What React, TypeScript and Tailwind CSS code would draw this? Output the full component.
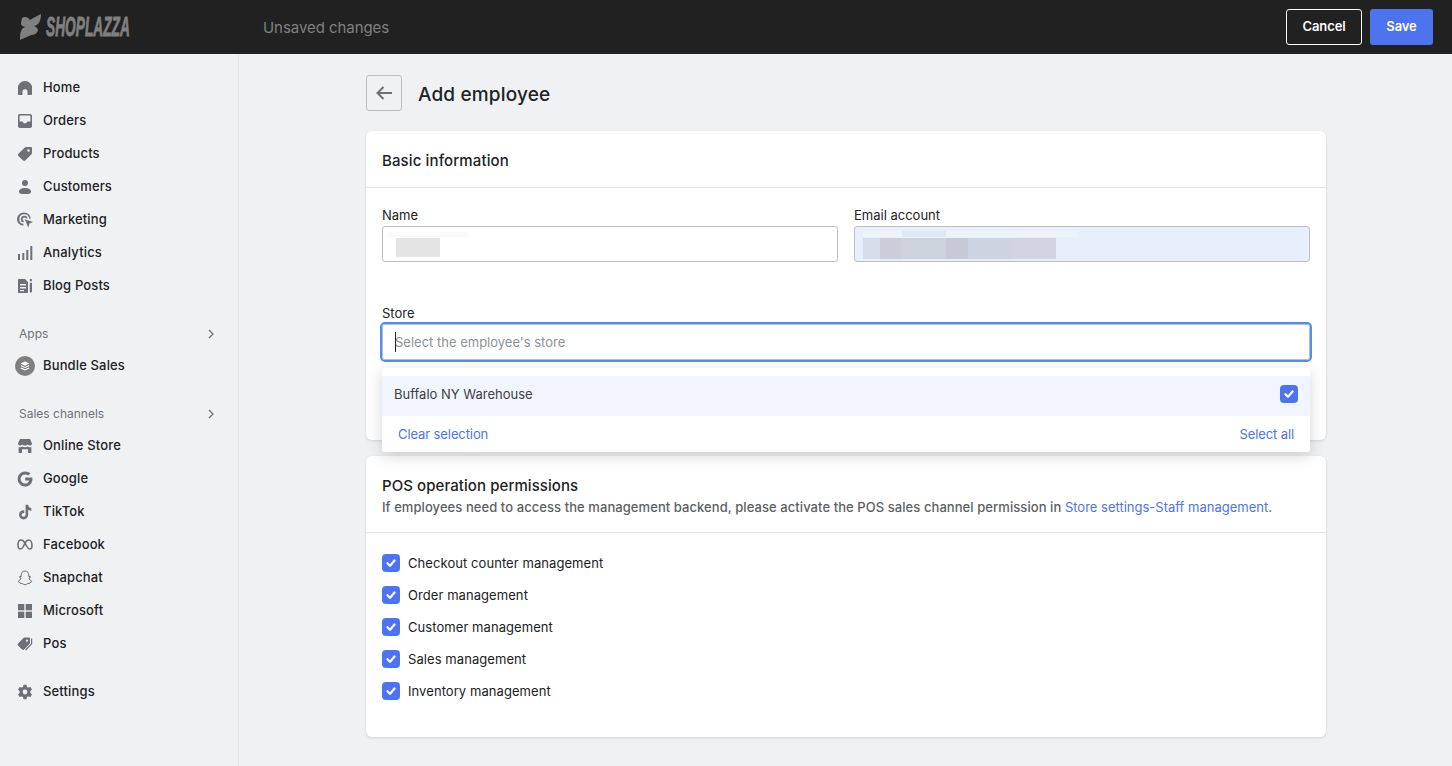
import React from "react";

const G = "#6d7175";

const Ic = ({ children, size = 16 }: { children: React.ReactNode; size?: number }) => (
  <svg width={size} height={size} viewBox="0 0 16 16" fill={G} className="shrink-0">
    {children}
  </svg>
);

const icons: Record<string, React.ReactNode> = {
  Home: <Ic><path d="M8 1 C5 1 3.2 2.6 1.5 5 C1.2 5.5 1 6 1 6.6 V14 C1 14.6 1.4 15 2 15 H5.5 V11.5 C5.5 10.1 6.6 9.2 8 9.2 C9.4 9.2 10.5 10.1 10.5 11.5 V15 H14 C14.6 15 15 14.6 15 14 V6.6 C15 6 14.8 5.5 14.5 5 C12.8 2.6 11 1 8 1Z" /></Ic>,
  Orders: <Ic><path fillRule="evenodd" d="M3 1 H13 C14.2 1 15 1.8 15 3 V13 C15 14.2 14.2 15 13 15 H3 C1.8 15 1 14.2 1 13 V3 C1 1.8 1.8 1 3 1Z M3.6 2.6 C3 2.6 2.6 3 2.6 3.6 V8.4 H5 C5.6 8.4 6 8.8 6.2 9.2 L6.7 10.2 H9.3 L9.8 9.2 C10 8.8 10.4 8.4 11 8.4 H13.4 V3.6 C13.4 3 13 2.6 12.4 2.6Z" /></Ic>,
  Products: <Ic><path fillRule="evenodd" d="M9 1 H14 C14.6 1 15 1.4 15 2 V7 C15 7.5 14.8 7.9 14.5 8.2 L8.2 14.6 C7.6 15.2 6.7 15.2 6.1 14.6 L1.4 9.9 C.8 9.3 .8 8.4 1.4 7.8 L7.8 1.5 C8.1 1.2 8.5 1 9 1Z M11.5 3.2 A1.3 1.3 0 1 0 11.5 5.8 A1.3 1.3 0 1 0 11.5 3.2Z" /></Ic>,
  Customers: <Ic><circle cx="8" cy="4" r="3" /><path d="M8 9 C4.6 9 2 10.2 2 12.6 C2 14.2 3.2 15 4.6 15 H11.4 C12.8 15 14 14.2 14 12.6 C14 10.2 11.4 9 8 9Z" /></Ic>,
  Marketing: <Ic><path d="M7 .6 A6.6 6.6 0 0 0 6.2 13.8 L6.5 12.1 A4.9 4.9 0 1 1 12.1 6.6 L13.8 6.8 A6.6 6.6 0 0 0 7 .6Z" /><path d="M7.3 3.8 A3.4 3.4 0 0 0 6.4 10.5 L6.9 9 A1.8 1.8 0 1 1 9 6.4 L10.7 6.2 A3.4 3.4 0 0 0 7.3 3.8Z" /><path d="M7.8 7.2 L16 10 L12.6 11.6 L11.2 15.4 Z" /></Ic>,
  Analytics: <Ic><rect x="1" y="9" width="2" height="6" /><rect x="5.3" y="8" width="2" height="7" /><rect x="9.3" y="5" width="2" height="10" /><rect x="13.3" y="1" width="2" height="14" /></Ic>,
  "Blog Posts": <Ic><path fillRule="evenodd" d="M2 1 H8 L11 4 V14 C11 14.6 10.6 15 10 15 H2 C1.4 15 1 14.6 1 14 V2 C1 1.4 1.4 1 2 1Z M3 6 V7.5 H9 V6Z M3 9 V10.5 H9 V9Z M3 12 V13.3 H7 V12Z" /><rect x="12.8" y="1" width="2.2" height="2.2" rx=".6" /><path d="M12.8 4.8 H15 V13.4 L13.9 15 L12.8 13.4Z" /></Ic>,
  "Online Store": <Ic><path d="M3 1 H13 L15 5.4 C15 6.8 14 7.6 13 7.6 C12.2 7.6 11.4 7.2 10.8 6.5 C10.2 7.2 9.2 7.6 8 7.6 C6.8 7.6 5.8 7.2 5.2 6.5 C4.6 7.2 3.8 7.6 3 7.6 C2 7.6 1 6.8 1 5.4Z" /><path d="M1.6 9 C3 9.4 4.2 9.2 5.2 8.6 C6.8 9.4 9.2 9.4 10.8 8.6 C11.8 9.2 13 9.4 14.4 9 V14.4 C14.4 14.8 14.2 15 13.8 15 H11 V12.2 C11 11.6 10.6 11.2 10 11.2 H6 C5.4 11.2 5 11.6 5 12.2 V15 H2.2 C1.8 15 1.6 14.8 1.6 14.4Z" /></Ic>,
  Google: <Ic><path d="M15.2 6.6 H8.2 V9.5 H12.2 C11.7 11.4 10.2 12.6 8.2 12.6 C5.6 12.6 3.6 10.6 3.6 8 C3.6 5.4 5.6 3.4 8.2 3.4 C9.4 3.4 10.4 3.8 11.2 4.5 L13.3 2.4 C11.9 1.2 10.1 .5 8.2 .5 C4 .5 .7 3.8 .7 8 C.7 12.2 4 15.5 8.2 15.5 C12.2 15.5 15.4 12.6 15.4 8.2 C15.4 7.6 15.3 7.1 15.2 6.6Z" /></Ic>,
  TikTok: <Ic><path d="M8.6 .8 H11.2 C11.3 2.8 12.5 4 14.4 4.2 V6.8 C13.2 6.8 12.1 6.4 11.2 5.8 V10.6 C11.2 13.4 9.2 15.4 6.6 15.4 C4 15.4 2 13.4 2 10.8 C2 8 4.4 5.9 7.3 6.3 V9 C5.9 8.6 4.6 9.5 4.6 10.8 C4.6 12 5.5 12.8 6.6 12.8 C7.8 12.8 8.6 11.9 8.6 10.6Z" /></Ic>,
  Facebook: <Ic><path fill="none" stroke={G} strokeWidth="1.6" d="M8 6 C6.8 4 5.6 3 4.2 3 C2.4 3 1 5 1 8 C1 10.4 2 12 3.6 12 C5.4 12 6.6 9.4 8 6 C9.4 3.6 10.4 3 11.6 3 C13.6 3 15 5.4 15 8.4 C15 10.6 14 12 12.6 12 C10.8 12 9.4 9 8 6Z" /></Ic>,
  Snapchat: <Ic><path fill="none" stroke={G} strokeWidth="1" d="M8 1 C5.6 1 4.2 2.8 4.2 5 V6.6 L2.8 6.4 C2.2 6.6 2.4 7.4 3 7.6 L4 8 C3.8 9.4 2.6 10.6 1.2 11.2 C1 11.8 1.8 12.2 3 12.4 L3.4 13.4 L5 13.4 C6 13.8 6.8 14.8 8 14.8 C9.2 14.8 10 13.8 11 13.4 L12.6 13.4 L13 12.4 C14.2 12.2 15 11.8 14.8 11.2 C13.4 10.6 12.2 9.4 12 8 L13 7.6 C13.6 7.4 13.8 6.6 13.2 6.4 L11.8 6.6 V5 C11.8 2.8 10.4 1 8 1Z" /></Ic>,
  Microsoft: <Ic><rect x="1" y="1" width="6.3" height="6.3" /><rect x="8.7" y="1" width="6.3" height="6.3" /><rect x="1" y="8.7" width="6.3" height="6.3" /><rect x="8.7" y="8.7" width="6.3" height="6.3" /></Ic>,
  Pos: <Ic><path fillRule="evenodd" d="M7.6 1.6 H12 C12.6 1.6 13 2 13 2.6 V7 C13 7.4 12.8 7.8 12.5 8.1 L7.2 13.6 C6.6 14.2 5.8 14.2 5.2 13.6 L1 9.4 C.4 8.8 .4 8 1 7.4 L6.5 2 C6.8 1.7 7.2 1.6 7.6 1.6Z M10 3.6 A1.1 1.1 0 1 0 10 5.8 A1.1 1.1 0 1 0 10 3.6Z" /><path fill="none" stroke={G} strokeWidth="1.2" d="M14.6 2.6 V7.4 C14.6 7.8 14.4 8.1 14.1 8.4 L8.6 14" /></Ic>,
  Settings: <Ic><path fillRule="evenodd" d="M6.5 .8 H9.5 L10 2.9 L11.3 3.6 L13.4 3 L15 5.6 L13.4 7.1 V8.9 L15 10.4 L13.4 13 L11.3 12.4 L10 13.1 L9.5 15.2 H6.5 L6 13.1 L4.7 12.4 L2.6 13 L1 10.4 L2.6 8.9 V7.1 L1 5.6 L2.6 3 L4.7 3.6 L6 2.9Z M8 5.6 A2.4 2.4 0 1 0 8 10.4 A2.4 2.4 0 1 0 8 5.6Z" /></Ic>,
};

const Bundle = () => (
  <span className="mr-[-2px] ml-[-2px] flex h-5 w-5 shrink-0 items-center justify-center rounded-full bg-[#7f7f7f]">
    <svg width="10" height="10" viewBox="0 0 10 10" fill="#fff">
      <path d="M5 .5 L9.5 2.6 L5 4.7 L.5 2.6Z" />
      <path d="M1.4 4.2 L5 5.9 L8.6 4.2 L9.5 5 L5 7.1 L.5 5Z" />
      <path d="M1.4 6.6 L5 8.3 L8.6 6.6 L9.5 7.4 L5 9.5 L.5 7.4Z" />
    </svg>
  </span>
);

const NavItem = ({ label }: { label: string }) => (
  <div className="flex h-[33px] items-center gap-[10px] pl-[17px] text-[13px] font-medium tracking-[0.14px] text-[#202223]">
    {label === "Bundle Sales" ? <Bundle /> : icons[label]}
    <span>{label}</span>
  </div>
);

const SectionHead = ({ label }: { label: string }) => (
  <div className="mt-5 mb-[3px] flex h-6 items-center justify-between pr-[22px] pl-[19px] text-[12px] text-[#6d7175]">
    <span>{label}</span>
    <svg width="10" height="10" viewBox="0 0 10 10" fill="none" stroke="#6d7175" strokeWidth="1.3">
      <path d="M3 1 L7 5 L3 9" />
    </svg>
  </div>
);

const Check = () => (
  <span className="flex h-[18px] w-[18px] shrink-0 items-center justify-center rounded-[4px] bg-[#4e73ee]">
    <svg width="12" height="12" viewBox="0 0 12 12" fill="none" stroke="#fff" strokeWidth="2.2" strokeLinecap="round" strokeLinejoin="round">
      <path d="M2.4 6.2 L5 8.7 L9.6 3.5" />
    </svg>
  </span>
);

const Perm = ({ label }: { label: string }) => (
  <div className="flex h-8 items-center gap-2 text-[13px] tracking-[0.07px] text-[#202223]">
    <Check />
    <span className="mt-[1px]">{label}</span>
  </div>
);

const emailBlur = [
  ["w-[17px]", "bg-[#d8ddec]"],
  ["w-[21px]", "bg-[#c9ced9]"],
  ["w-[45px]", "bg-[#ccd3dc]"],
  ["w-[22px]", "bg-[#c5cad6]"],
  ["w-[44px]", "bg-[#cdd3e0]"],
  ["w-[44px]", "bg-[#d0d5e1]"],
];

export default function App() {
  return (
    <div className="flex h-[766px] w-[1452px] flex-col overflow-hidden bg-[#f0f1f3] font-['Inter',sans-serif]">
      <header className="flex h-[54px] shrink-0 items-center bg-[#212121]">
        <div className="flex w-[263px] items-center pl-[19px]">
          <svg width="22" height="26" viewBox="0 0 22 26" fill="#808080" className="shrink-0">
            <path d="M3 4 C6 2 9 3 11 6 C14 4 18 2 22 0 C22 4 21 8 19 10 C18 11 16 12 15 12 C17 13 19 14 19 16 C18 20 15 21 12 21 C10 22 5 24 1 26 C1 22 1 18 3 15 C4 14 5 13 7 13 C5 13 2 12 2 9 Z" />
          </svg>
          <span className="ml-[5px] origin-left scale-x-[0.49] font-['Liberation_Sans',sans-serif] text-[28px] leading-none font-bold whitespace-nowrap text-[#808080] italic [-webkit-text-stroke:0.9px_#808080]">
            SHOPLAZZA
          </span>
        </div>
        <span className="pt-[2px] text-[15px] tracking-[-0.06px] text-[#808080]">Unsaved changes</span>
        <div className="ml-auto flex items-center gap-2 pr-[19px]">
          <button className="h-9 w-[76px] rounded-[3px] border border-white text-[13px] font-semibold tracking-[-0.1px] text-white">Cancel</button>
          <button className="h-9 w-[63px] rounded-[3px] bg-[#4e73ee] text-[13px] font-semibold tracking-[-0.1px] text-white">Save</button>
        </div>
      </header>
      <div className="flex min-h-0 flex-1">
        <aside className="w-[239px] shrink-0 border-r border-[#e3e4e6] pt-[17px]">
          {["Home", "Orders", "Products", "Customers", "Marketing", "Analytics", "Blog Posts"].map((l) => (
            <NavItem key={l} label={l} />
          ))}
          <SectionHead label="Apps" />
          <NavItem label="Bundle Sales" />
          <SectionHead label="Sales channels" />
          {["Online Store", "Google", "TikTok", "Facebook", "Snapchat", "Microsoft", "Pos"].map((l) => (
            <NavItem key={l} label={l} />
          ))}
          <div className="mt-[15px]">
            <NavItem label="Settings" />
          </div>
        </aside>
        <main className="ml-[127px] w-[960px] pt-[21px]">
          <div className="flex h-9 items-center gap-4">
            <button className="flex h-9 w-9 items-center justify-center rounded-[3px] border border-[#babfc3]">
              <svg width="18" height="18" viewBox="0 0 18 18" fill="none" stroke="#6d7175" strokeWidth="2">
                <path d="M17 9 H2.5 M8.5 3 L2.5 9 L8.5 15" />
              </svg>
            </button>
            <h1 className="pt-1 text-[19px] font-medium tracking-[0.15px] text-[#202223]">Add employee</h1>
          </div>
          <section className="relative mt-5 h-[309px] rounded-md bg-white shadow-[0_1px_3px_rgba(0,0,0,0.12)]">
            <div className="flex h-[57px] items-center border-b border-[#e3e4e6] px-4 pt-1 text-[15px] font-medium tracking-[0.12px] text-[#202223]">Basic information</div>
            <div className="px-4 pt-[17px]">
              <div className="grid grid-cols-2 gap-4">
                <div>
                  <label className="block h-[21px] text-[13px] leading-5 text-[#202223]">Name</label>
                  <div className="relative h-9 rounded-[3px] border border-[#babfc3] bg-white">
                    <span className="absolute top-[5px] left-[5px] h-[5px] w-[80px] bg-[#fafafa]" />
                    <span className="absolute top-[11px] left-[13px] h-[19px] w-[44px] bg-[#e4e4e4]" />
                  </div>
                </div>
                <div>
                  <label className="block h-[21px] text-[13px] leading-5 text-[#202223]">Email account</label>
                  <div className="relative h-9 rounded-[3px] border border-[#babfc3] bg-[#e8effb]">
                    <span className="absolute top-[4px] left-[8px] h-[6px] w-[214px] bg-[#eef2fa]" />
                    <span className="absolute top-[4px] left-[47px] h-[6px] w-[44px] bg-[#e2e8f3]" />
                    <div className="absolute top-[11px] left-[8px] flex h-[21px]">
                      {emailBlur.map(([w, c]) => (
                        <span key={w + c} className={`${w} ${c}`} />
                      ))}
                    </div>
                  </div>
                </div>
              </div>
              <label className="mt-[41px] block h-[21px] text-[13px] leading-5 text-[#202223]">Store</label>
              <div className="relative flex h-9 items-center rounded-[3px] border border-[#babfc3] bg-white pt-[2px] pl-3 text-[13px] text-[#8c9196] outline-2 outline-offset-[0.5px] outline-[#4f8ff0]">
                <span className="absolute top-[7px] left-3 h-5 w-px bg-[#202223]" />
                Select the employee's store
              </div>
            </div>
            <div className="absolute top-[237px] left-4 z-10 w-[928px] rounded-[3px] bg-white pt-2 shadow-[0_4px_16px_rgba(0,0,0,0.16)]">
              <div className="flex h-10 items-center justify-between bg-[#f1f5fd] pr-3 pb-1 pl-3 text-[13px] text-[#3d4043]">
                <span className="mt-[2px]">Buffalo NY Warehouse</span>
                <Check />
              </div>
              <div className="flex h-9 items-center justify-between px-4 pt-[2px] text-[13px] tracking-[-0.1px] text-[#4e73ee]">
                <span>Clear selection</span>
                <span>Select all</span>
              </div>
            </div>
          </section>
          <section className="mt-4 h-[281px] rounded-md bg-white shadow-[0_1px_3px_rgba(0,0,0,0.12)]">
            <div className="h-[77px] border-b border-[#e3e4e6] px-4 pt-5">
              <div className="text-[15px] leading-5 font-medium tracking-[0.07px] text-[#202223]">POS operation permissions</div>
              <div className="mt-[1px] text-[13px] leading-5 font-medium tracking-[0.07px] text-[#5c5f62]">
                If employees need to access the management backend, please activate the POS sales channel permission in{" "}
                <span className="font-normal tracking-normal text-[#4e73ee]">Store settings-Staff management</span>.
              </div>
            </div>
            <div className="px-4 pt-[14px]">
              {["Checkout counter management", "Order management", "Customer management", "Sales management", "Inventory management"].map((l) => (
                <Perm key={l} label={l} />
              ))}
            </div>
          </section>
        </main>
      </div>
    </div>
  );
}
